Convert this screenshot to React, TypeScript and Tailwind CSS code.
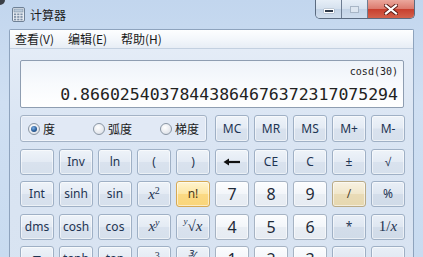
import React from "react";

type V = "fn" | "num" | "hover" | "op" | "opHover";

function Btn({ children, v = "fn", className = "" }: { children?: React.ReactNode; v?: V; className?: string }) {
  const base =
    "flex items-center justify-center rounded-[3px] border select-none shadow-[inset_0_0_0_1px_rgba(255,255,255,0.55)] ";
  const styles: Record<V, string> = {
    fn: "border-[#9fb0c5] bg-[linear-gradient(to_bottom,#eef3f9_0%,#e4ebf4_48%,#d9e2ee_52%,#d6e0ec_100%)] text-[#1e3452]",
    num: "border-[#a6b3c3] bg-[linear-gradient(to_bottom,#fcfdfe_0%,#f3f6fa_48%,#e9eef4_52%,#e6ebf2_100%)] text-[#1f2a38]",
    hover:
      "border-[#d6a955] bg-[linear-gradient(to_bottom,#fff4cf_0%,#fde6a4_48%,#fbd983_52%,#f9d57a_100%)] text-[#4b3a18]",
    op: "border-[#9fb0c5] bg-[linear-gradient(to_bottom,#e9eff7_0%,#dfe7f1_48%,#d3ddea_52%,#d0dbe8_100%)] text-[#1e3452]",
    opHover:
      "border-[#b9ab88] bg-[linear-gradient(to_bottom,#f8f2e2_0%,#f1e7cb_48%,#e9dbb6_52%,#e6d8b0_100%)] text-[#4a4230]",
  };
  return <div className={base + styles[v] + " " + className}>{children}</div>;
}

const lbl = "text-[12px] font-['Noto_Sans',sans-serif] leading-none";
const numL = "text-[16px] font-['Noto_Sans',sans-serif] leading-none";
const mathL = "text-[15px] font-['Liberation_Serif',serif] italic leading-none";

function Radio({ on }: { on?: boolean }) {
  return (
    <span className="w-[12px] h-[12px] rounded-full border border-[#8a96a4] bg-[radial-gradient(circle_at_40%_35%,#ffffff_0%,#e6e9ee_60%,#cfd5dd_100%)] flex items-center justify-center">
      {on && (
        <span className="w-[6px] h-[6px] rounded-full bg-[radial-gradient(circle_at_40%_35%,#7fb1e6_0%,#2a5e9a_55%,#153a68_100%)]" />
      )}
    </span>
  );
}

function CalcIcon() {
  return (
    <svg width="13" height="15" viewBox="0 0 13 15">
      <rect x="0.5" y="0.5" width="12" height="14" rx="1.5" fill="#e9eef4" stroke="#6f8196" />
      <rect x="2" y="2" width="9" height="3" fill="#b9c9d9" stroke="#7d8fa3" strokeWidth="0.6" />
      {[0, 1, 2].map((r) =>
        [0, 1, 2].map((c) => (
          <rect key={r + "-" + c} x={2 + c * 3.2} y={6.5 + r * 2.6} width="2.2" height="1.7" fill="#7e90a6" />
        ))
      )}
    </svg>
  );
}

export default function App() {
  const cjk = "font-['Noto_Sans_CJK_SC','Noto_Sans',sans-serif]";
  return (
    <div className="relative w-[423px] h-[257px] overflow-hidden bg-[linear-gradient(to_bottom,#c2d6ee_0%,#cfdff2_40%,#c8dbf0_100%)]">
      {/* dark corner */}
      <div className="absolute left-0 top-0 w-[5px] h-[5px] bg-[#3a3f46] rounded-br-[5px]" />
      {/* Title bar */}
      <div className="h-[29px] flex items-center pl-[12px] gap-[5px]">
        <CalcIcon />
        <span className={cjk + " text-[12px] text-[#1a1a1a] leading-none pt-[1px]"}>计算器</span>
      </div>
      {/* window controls */}
      <div className="absolute top-0 right-[8px] flex h-[19px] rounded-b-[5px] border border-t-0 border-[#5b6b80] overflow-hidden">
        <div className="w-[26px] h-full flex items-end justify-center pb-[5px] bg-[linear-gradient(to_bottom,#e6eef7_0%,#d5e1ee_50%,#c3d3e6_51%,#cfdded_100%)] border-r border-[#6d7d92]">
          <div className="w-[10px] h-[4px] bg-[#2e3a4a] border border-white shadow-[0_0_1px_#000]" />
        </div>
        <div className="w-[26px] h-full flex items-center justify-center bg-[linear-gradient(to_bottom,#e6eef7_0%,#d5e1ee_50%,#c3d3e6_51%,#cfdded_100%)] border-r border-[#6d7d92]">
          <div className="w-[9px] h-[7px] border border-[#a8b6c6] bg-[#dde6f0]" />
        </div>
        <div className="w-[46px] h-full flex items-center justify-center bg-[linear-gradient(to_bottom,#eba79c_0%,#dc7b6e_48%,#c8402f_52%,#d3624c_100%)]">
          <svg width="14" height="11" viewBox="0 0 14 11">
            <path d="M2 1.5 L12 9.5 M12 1.5 L2 9.5" stroke="#5a1c16" strokeWidth="4" strokeLinecap="square" />
            <path d="M2 1.5 L12 9.5 M12 1.5 L2 9.5" stroke="#ffffff" strokeWidth="2.2" strokeLinecap="square" />
          </svg>
        </div>
      </div>

      {/* client area */}
      <div className="mx-[9px] border border-[#8ea3bd] border-b-0 rounded-t-[2px] bg-[#dae5f3]">
        {/* menu */}
        <div className={cjk + " h-[19px] flex items-center text-[12px] text-[#1a1a1a] bg-[linear-gradient(to_bottom,#fdfeff_0%,#f1f5fa_60%,#e7edf5_100%)] border-b border-[#c3d0e0]"}>
          <span className="pl-[5px] w-[58px]">查看(V)</span>
          <span className="w-[53px]">编辑(E)</span>
          <span className="w-[53px]">帮助(H)</span>
        </div>
        {/* body */}
        <div className="pt-[11px] pl-[10px] pr-[9px] pb-[20px] bg-[linear-gradient(to_bottom,#e4ecf7_0%,#dae5f3_30%,#d8e3f1_100%)]">
          {/* display */}
          <div className="h-[48px] w-[384px] rounded-[2px] border border-[#8e9db1] bg-[linear-gradient(to_bottom,#eef3f9_0%,#f8fafd_50%,#ffffff_100%)] flex flex-col items-end pr-[5px] pt-[3px] font-['DejaVu_Sans_Mono',monospace] text-[#222]">
            <div className="text-[10px] leading-[16px]">cosd(30)</div>
            <div className="text-[16.5px] leading-[22px] mt-[4px] tracking-[0px]">0.86602540378443864676372317075294</div>
          </div>
          {/* buttons */}
          <div className="mt-[7px] grid grid-cols-[repeat(10,34px)] grid-rows-[27px_26px_26px_26px_26px] gap-x-[5px] gap-y-[6.5px]">
            {/* row 0 */}
            <div className={"col-span-5 w-[187px] rounded-[3px] border border-[#a3b2c5] bg-[#e1e9f5] shadow-[inset_0_0_0_1px_rgba(255,255,255,0.5)] flex items-center pl-[7px] " + cjk + " text-[12px] text-[#1a1a1a]"}>
              <span className="w-[65px] flex items-center gap-[3px]"><Radio on />度</span>
              <span className="w-[67px] flex items-center gap-[3px]"><Radio />弧度</span>
              <span className="flex items-center gap-[3px]"><Radio />梯度</span>
            </div>
            <Btn><span className={lbl}>MC</span></Btn>
            <Btn><span className={lbl}>MR</span></Btn>
            <Btn><span className={lbl}>MS</span></Btn>
            <Btn><span className={lbl}>M+</span></Btn>
            <Btn><span className={lbl}>M-</span></Btn>
            {/* row 1 */}
            <Btn />
            <Btn><span className={lbl}>Inv</span></Btn>
            <Btn><span className={lbl}>ln</span></Btn>
            <Btn><span className={lbl}>(</span></Btn>
            <Btn><span className={lbl}>)</span></Btn>
            <Btn>
              <svg width="18" height="8" viewBox="0 0 18 8">
                <path d="M5 4 H17" stroke="#111" strokeWidth="2.2" />
                <path d="M0.5 4 L6 0.5 L6 7.5 Z" fill="#111" />
              </svg>
            </Btn>
            <Btn><span className={lbl}>CE</span></Btn>
            <Btn><span className={lbl}>C</span></Btn>
            <Btn><span className={lbl + " text-[11px]"}>±</span></Btn>
            <Btn><span className={lbl + " text-[11px]"}>√</span></Btn>
            {/* row 2 */}
            <Btn><span className={lbl}>Int</span></Btn>
            <Btn><span className={lbl}>sinh</span></Btn>
            <Btn><span className={lbl}>sin</span></Btn>
            <Btn><span className={mathL}>x<sup className="text-[10px] not-italic -top-[0.5em]">2</sup></span></Btn>
            <Btn v="hover"><span className={lbl}>n!</span></Btn>
            <Btn v="num"><span className={numL}>7</span></Btn>
            <Btn v="num"><span className={numL}>8</span></Btn>
            <Btn v="num"><span className={numL}>9</span></Btn>
            <Btn v="opHover"><span className={lbl}>/</span></Btn>
            <Btn v="op"><span className={lbl}>%</span></Btn>
            {/* row 3 */}
            <Btn><span className={lbl}>dms</span></Btn>
            <Btn><span className={lbl}>cosh</span></Btn>
            <Btn><span className={lbl}>cos</span></Btn>
            <Btn><span className={mathL}>x<sup className="text-[10px] -top-[0.5em]">y</sup></span></Btn>
            <Btn><span className={mathL + " flex items-start"}><span className="text-[9px] leading-none mt-[-2px]">y</span><span>√x</span></span></Btn>
            <Btn v="num"><span className={numL}>4</span></Btn>
            <Btn v="num"><span className={numL}>5</span></Btn>
            <Btn v="num"><span className={numL}>6</span></Btn>
            <Btn v="op"><span className={lbl}>*</span></Btn>
            <Btn v="op"><span className={mathL + " not-italic text-[13px]"}>1/<i>x</i></span></Btn>
            {/* row 4 */}
            <Btn><span className={lbl}>π</span></Btn>
            <Btn><span className={lbl}>tanh</span></Btn>
            <Btn><span className={lbl}>tan</span></Btn>
            <Btn><span className={mathL}>x<sup className="text-[10px] not-italic -top-[0.5em]">3</sup></span></Btn>
            <Btn><span className={mathL}>∛x</span></Btn>
            <Btn v="num"><span className={numL}>1</span></Btn>
            <Btn v="num"><span className={numL}>2</span></Btn>
            <Btn v="num"><span className={numL}>3</span></Btn>
            <Btn v="op"><span className={lbl}>-</span></Btn>
            <Btn v="op" className="row-span-2"><span className={lbl}>=</span></Btn>
          </div>
        </div>
      </div>
    </div>
  );
}
